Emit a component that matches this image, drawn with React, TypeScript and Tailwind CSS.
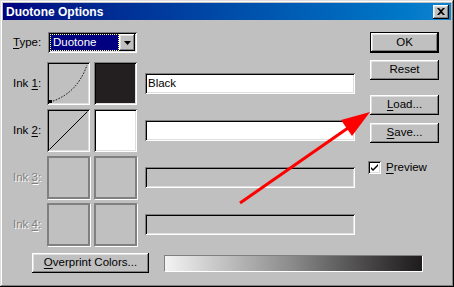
import React from "react"

const raised =
  "shadow-[inset_-1px_-1px_0_#000,inset_1px_1px_0_#fff,inset_-2px_-2px_0_#808080,inset_2px_2px_0_#dfdfdf]"
const sunken =
  "shadow-[inset_1px_1px_0_#808080,inset_-1px_-1px_0_#fff,inset_2px_2px_0_#000,inset_-2px_-2px_0_#dfdfdf]"
const disabledText = "text-[#808080] [text-shadow:1px_1px_0_#fff]"

const Button = ({ children, isDefault = false }: { children: React.ReactNode; isDefault?: boolean }) => (
  <div
    className={`flex items-center justify-center bg-[#c0c0c0] ${isDefault ? "h-[21px] border border-black" : "h-[20px]"}`}
  >
    <div className={`flex h-full w-full items-center justify-center ${raised}`}>{children}</div>
  </div>
)

const CurveBox = ({ kind }: { kind: "curve" | "line" | "none" }) => {
  if (kind === "none") {
    return <div className="h-[43px] w-[43px] border-2 border-[#808080] shadow-[1px_1px_0_#fff]" />
  }
  return (
    <div className={`h-[43px] w-[43px] bg-[#c0c0c0] p-[2px] ${sunken}`}>
      <svg width="39" height="39" viewBox="0 0 39 39">
        {kind === "curve" ? (
          <>
            <path d="M1 38 Q 28 30 38 1" fill="none" stroke="#000" strokeWidth="1" strokeDasharray="1.5 1.5" />
            <rect x="0" y="36" width="3" height="3" fill="#000" />
          </>
        ) : (
          <line x1="0.5" y1="38.5" x2="38.5" y2="0.5" stroke="#000" strokeWidth="1" />
        )}
      </svg>
    </div>
  )
}

const ColorBox = ({ color }: { color?: string }) => {
  if (!color) {
    return <div className="h-[43px] w-[43px] border-2 border-[#808080] shadow-[1px_1px_0_#fff]" />
  }
  return (
    <div className={`h-[43px] w-[43px] p-[2px] ${sunken}`}>
      <div className="h-full w-full" style={{ background: color }} />
    </div>
  )
}

const InkRow = ({
  n,
  kind,
  color,
  value,
  enabled,
}: {
  n: number
  kind: "curve" | "line" | "none"
  color?: string
  value?: string
  enabled: boolean
}) => (
  <div className="flex h-[43px] items-center">
    <div className={`w-[34px] ${enabled ? "text-black" : disabledText}`}>
      Ink <u className="underline-offset-2">{n}</u>:
    </div>
    <CurveBox kind={kind} />
    <div className="ml-[4px]">
      <ColorBox color={color} />
    </div>
    <div
      className={`ml-[8px] flex h-[21px] w-[210px] items-center px-[3px] ${sunken} ${enabled ? "bg-white" : "bg-[#c0c0c0]"}`}
    >
      {value}
    </div>
  </div>
)

export default function App() {
  return (
    <div
      className="relative h-[287px] w-[454px] overflow-hidden bg-[#c0c0c0] p-[3px] text-[11.5px] text-black shadow-[inset_-1px_-1px_0_#000,inset_1px_1px_0_#dfdfdf,inset_-2px_-2px_0_#808080,inset_2px_2px_0_#fff]"
      style={{ fontFamily: '"Liberation Sans", Arial, sans-serif' }}
    >
      {/* Title bar */}
      <div className="flex h-[17px] items-center justify-between bg-gradient-to-r from-[#000080] to-[#1084d0] pl-[3px] pr-[2px]">
        <span className="text-[12px] font-bold text-white">Duotone Options</span>
        <div className={`flex h-[14px] w-[16px] items-center justify-center bg-[#c0c0c0] ${raised}`}>
          <svg width="8" height="7" viewBox="0 0 8 7">
            <path d="M0 0h2l2 2 2-2h2L5 3.5 8 7H6L4 5 2 7H0l3-3.5z" fill="#000" />
          </svg>
        </div>
      </div>

      {/* Body */}
      <div className="flex">
        <div className="shrink-0 pl-[10px]">
          <div className="mt-[12px] flex h-[21px] items-center">
            <div className="w-[35px]">
              <u className="underline-offset-2">T</u>ype:
            </div>
            <div className={`flex h-[21px] w-[89px] items-center bg-white p-[2px] ${sunken}`}>
              <div className="flex h-full flex-1 items-center border border-dotted border-[#ffff80] bg-[#000080] px-[2px] text-white">
                Duotone
              </div>
              <div className={`flex h-full w-[16px] items-center justify-center bg-[#c0c0c0] ${raised}`}>
                <svg width="7" height="4" viewBox="0 0 7 4">
                  <path d="M0 0h7L3.5 4z" fill="#000" />
                </svg>
              </div>
            </div>
          </div>

          <div className="mt-[9px] flex flex-col gap-[4px]">
            <InkRow n={1} kind="curve" color="#231f20" value="Black" enabled />
            <InkRow n={2} kind="line" color="#ffffff" enabled />
            <InkRow n={3} kind="none" enabled={false} />
            <InkRow n={4} kind="none" enabled={false} />
          </div>
        </div>

        {/* Right column */}
        <div className="ml-auto mr-[12px] w-[69px] shrink-0">
          <div className="mt-[12px]">
            <Button isDefault>OK</Button>
          </div>
          <div className="mt-[7px]">
            <Button>Reset</Button>
          </div>
          <div className="mt-[15px]">
            <Button>
              <span>
                <u className="underline-offset-2">L</u>oad...
              </span>
            </Button>
          </div>
          <div className="mt-[8px]">
            <Button>
              <span>
                <u className="underline-offset-2">S</u>ave...
              </span>
            </Button>
          </div>
          <div className="mt-[16px] -ml-[2px] flex items-center gap-[5px]">
            <div className={`flex h-[13px] w-[13px] items-center justify-center bg-white ${sunken}`}>
              <svg width="7" height="7" viewBox="0 0 7 7">
                <path d="M0 3l2 2 5-5v2L2 7 0 5z" fill="#000" />
              </svg>
            </div>
            <span>
              <u className="underline-offset-2">P</u>review
            </span>
          </div>
        </div>
      </div>

      {/* Bottom row */}
      <div className="mt-[7px] flex items-center pl-[29px]">
        <div className="w-[117px]">
          <Button>
            <span>
              <u className="underline-offset-2">O</u>verprint Colors...
            </span>
          </Button>
        </div>
        <div className="ml-[15px] h-[16px] w-[258px] bg-gradient-to-r from-[#f4f4f4] via-[#8a8a8a] to-[#1e1b1c] shadow-[inset_1px_1px_0_#808080,1px_1px_0_#fff]" />
      </div>

      {/* Red annotation arrow */}
      <svg className="pointer-events-none absolute left-0 top-0" width="454" height="287" viewBox="0 0 454 287">
        <line x1="240" y1="203" x2="348" y2="128" stroke="#ff0000" strokeWidth="3" />
        <polygon points="370,112 352,136 341,120" fill="#ff0000" />
      </svg>
    </div>
  )
}
